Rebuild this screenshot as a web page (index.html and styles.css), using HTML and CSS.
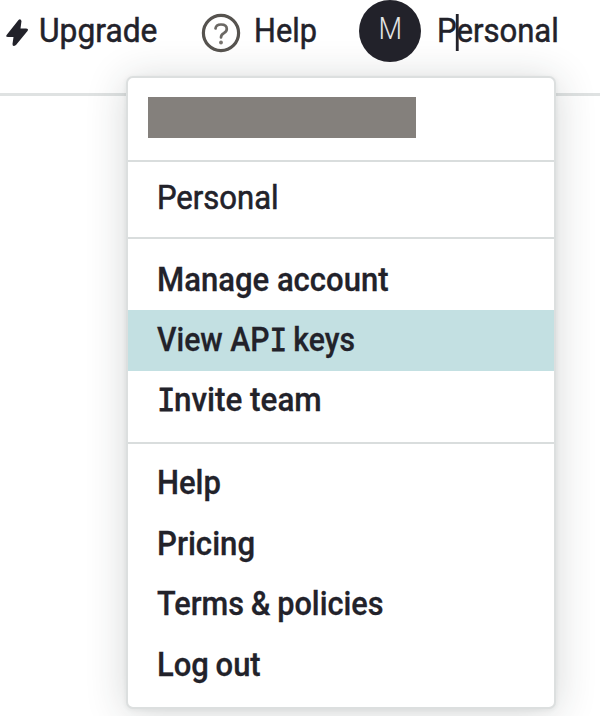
FILE: index.html
```html
<!DOCTYPE html>
<html lang="en">
<head>
<meta charset="utf-8">
<title>Account menu</title>
<link rel="stylesheet" href="styles.css">
</head>
<body>
<header class="topbar">
  <a class="nav upgrade">
    <svg class="bolt" viewBox="0 0 24 30"><path d="M13.500 2 L2 16.500 Q0 19 3 19 H8.500 L7.500 26 Q7.500 29.500 11 27 L22.500 13 Q24 10.500 21 10.500 H15.500 L16.500 3 Q15.500 0 13.500 2Z" fill="#22222a"/></svg>
    <span class="label w-upgrade">Upgrade</span>
  </a>
  <a class="nav help">
    <svg class="question" viewBox="0 0 40 40" fill="none" stroke-linecap="round"><circle cx="20" cy="20" r="17.600" stroke="#56534f" stroke-width="3.200"/><path d="M14.500 15.500 Q15 11.500 20 11.500 Q25.800 11.500 25.800 16 Q25.800 18.500 22.800 20.200 Q20 21.700 20 24.500" stroke="#6b6864" stroke-width="2.700"/><circle cx="20" cy="29.500" r="1.900" fill="#77736e"/></svg>
    <span class="label w-help">Help</span>
  </a>
  <a class="nav profile">
    <span class="avatar"><span class="initial">M</span></span>
    <span class="label w-profile">Personal<i class="caret"></i></span>
  </a>
</header>
<nav class="menu">
  <section class="account"><div class="redacted"></div></section>
  <section class="org"><a class="item"><span class="w-org">Personal</span></a></section>
  <section class="manage">
    <a class="item"><span class="w-manage">Manage account</span></a>
    <a class="item active"><span class="w-view">View AP<span class="slab">I</span> keys</span></a>
    <a class="item"><span class="w-invite"><span class="slab">I</span>nvite team</span></a>
  </section>
  <section class="links">
    <a class="item"><span class="w-help2">Help</span></a>
    <a class="item"><span class="w-pricing">Pricing</span></a>
    <a class="item"><span class="w-terms">Terms &amp; policies</span></a>
    <a class="item"><span class="w-logout">Log out</span></a>
  </section>
</nav>
</body>
</html>
```

FILE: styles.css
```css
* { box-sizing: border-box; }
body {
  margin: 0;
  height: 716px;
  overflow: hidden;
  background: #fff;
  color: #22222a;
  font: 500 33px/60px Roboto, "Liberation Sans", sans-serif;
}
.topbar {
  height: 96px;
  border-bottom: 3px solid #dfe2e2;
  display: flex;
  align-items: flex-start;
}
.nav { display: flex; align-items: center; height: 62px; position: relative; z-index: 2; }
.upgrade { margin-left: 5px; width: 196px; }
.bolt { width: 24px; height: 30px; margin: 4px 9px 0 0; }
.help { width: 158px; }
.question { width: 40px; height: 40px; margin: 4px 12px 0 0; }
.avatar {
  width: 62px; height: 62px; border-radius: 50%;
  background: #22222a; color: #e2e4e4;
  font-size: 31px; font-weight: 300; line-height: 57px; text-align: center;
  margin-right: 16px;
}
.initial { display: inline-block; transform: scaleX(.88); }
.label { position: relative; font-weight: 400; -webkit-text-stroke: .5px; white-space: nowrap; }
.caret { position: absolute; left: 20px; top: 13px; width: 3px; height: 37px; background: #22222a; }
.menu {
  position: relative;
  width: 430px; height: 633px;
  margin: -20px 0 0 126px;
  border: 2px solid #dcdfdf;
  border-radius: 7px;
  background: #fff;
  box-shadow: 0 4px 40px rgba(30, 45, 45, .19), 0 1px 5px rgba(30, 45, 45, .07);
}
.menu section + section { border-top: 2px solid #d9dddd; }
.account { height: 82px; padding: 19px 20px; }
.redacted { width: 268px; height: 41px; background: #84807c; }
.org { height: 77px; padding-top: 6px; }
.manage { height: 205px; padding-top: 11px; }
.links { padding-top: 9px; }
.item { display: block; height: 61px; padding-left: 28.500px; white-space: nowrap; }
.item > span { display: inline-block; -webkit-text-stroke: .3px; }
.item > span, .label { transform-origin: left center; }
.manage .item { height: 60px; }
.links .item { height: 60.5px; }
.org .item > span { font-weight: 400; -webkit-text-stroke: .6px; }
.manage .active { height: 61px; background: #c3e0e2; }
.manage .item:last-child { line-height: 58px; }
.slab {
  display: inline-block;
  font-family: "DejaVu Sans Mono", monospace;
  font-weight: 400;
  font-size: 32px;
  line-height: 1;
  letter-spacing: -1.500px;
  -webkit-text-stroke: .8px;
}

/* Horizontal condensing per label */
.w-upgrade { transform: translateX(1px) scaleX(.962); }
.w-help { transform: translateX(1px) scaleX(.93); }
.w-profile { transform: scaleX(.942); }
.w-org { transform: scaleX(.94); }
.w-manage { transform: scaleX(.941); }
.w-view { transform: scaleX(.915); }
.w-invite { transform: scaleX(.952); }
.w-help2 { transform: scaleX(.94); }
.w-pricing { transform: scaleX(.945); }
.w-terms { transform: scaleX(.93); word-spacing: -1px; }
.w-logout { transform: scaleX(.938); word-spacing: -1px; }
```
